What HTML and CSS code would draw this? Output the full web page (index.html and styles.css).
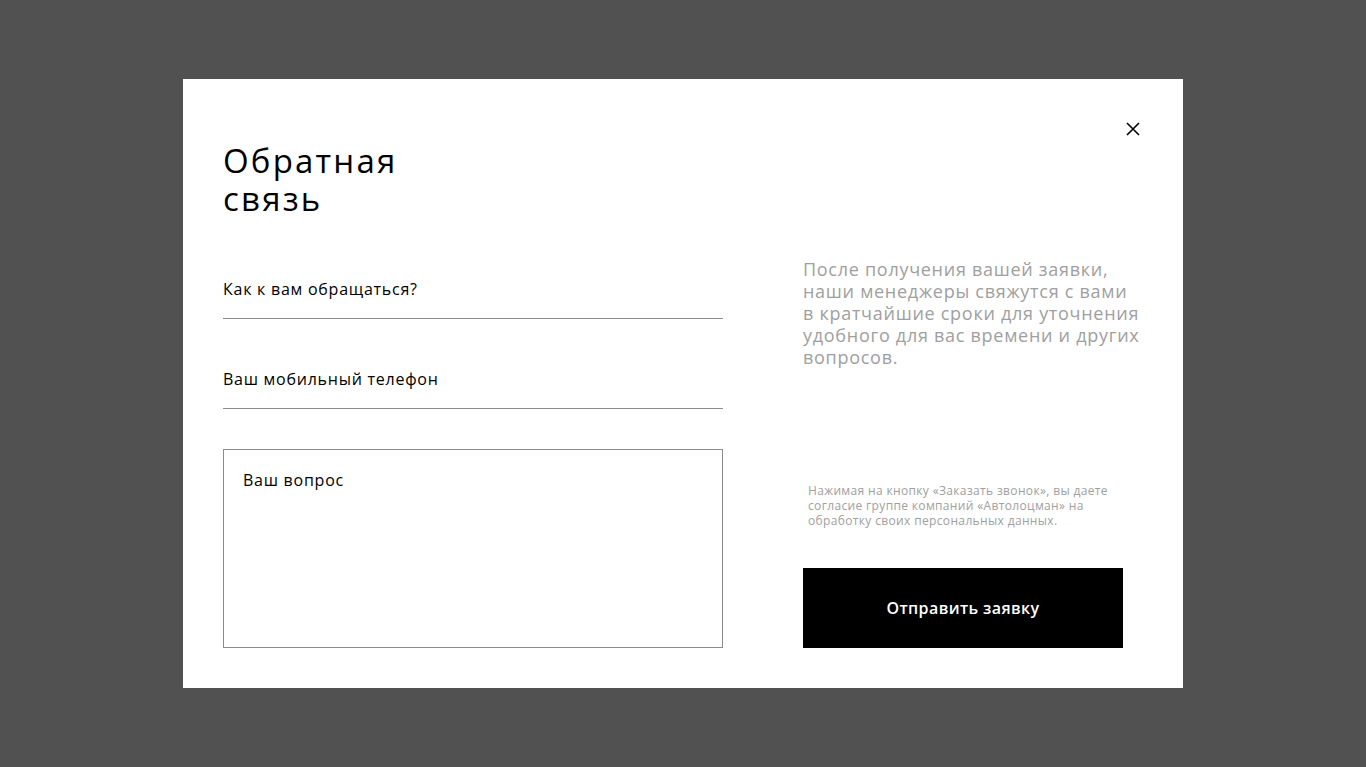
FILE: index.html
```html
<!DOCTYPE html>
<html lang="ru">
<head>
<meta charset="utf-8">
<title>Обратная связь</title>
<link rel="stylesheet" href="styles.css">
</head>
<body>
<div class="overlay">
  <div class="modal">
    <button class="close" aria-label="Закрыть">
      <svg width="14" height="14" viewBox="0 0 14 14"><path d="M1 1L13 13M13 1L1 13" stroke="#000" stroke-width="1.6" fill="none"/></svg>
    </button>
    <h1 class="title"><span class="title-line">Обратная</span><span class="title-line">связь</span></h1>
    <div class="body">
      <div class="form">
        <div class="field"><span class="label">Как к вам обращаться?</span></div>
        <div class="field"><span class="label">Ваш мобильный телефон</span></div>
        <div class="textarea"><span class="label">Ваш вопрос</span></div>
      </div>
      <div class="side">
        <p class="info">После получения вашей заявки,<br>наши менеджеры свяжутся с вами<br>в кратчайшие сроки для уточнения<br>удобного для вас времени и других<br>вопросов.</p>
        <p class="note">Нажимая на кнопку «Заказать звонок», вы даете<br>согласие группе компаний «Автолоцман» на<br>обработку своих персональных данных.</p>
        <button class="submit">Отправить заявку</button>
      </div>
    </div>
  </div>
</div>
</body>
</html>
```
FILE: styles.css
```css
* { box-sizing: border-box; }
html, body { margin: 0; height: 100%; }
body {
  background: #515151;
  font-family: "Open Sans", "Noto Sans", sans-serif;
  color: #000;
}
.overlay {
  height: 767px;
  padding-top: 79px;
  display: flex;
  justify-content: center;
  align-items: flex-start;
}
.modal {
  position: relative;
  width: 1000px;
  height: 609px;
  background: #fff;
  padding: 63px 40px 40px 40px;
}
.close {
  position: absolute;
  top: 43px;
  right: 43px;
  width: 14px;
  height: 14px;
  padding: 0;
  border: 0;
  background: none;
  display: block;
}
.close svg { display: block; }
.title {
  margin: 0;
  font-size: 33px;
  font-weight: 500;
  line-height: 38px;
  letter-spacing: 2.2px;
}
.title-line { display: block; height: 38px; }
.body {
  display: flex;
  gap: 80px;
  margin-top: 29px;
}
.form { width: 500px; display: flex; flex-direction: column; }
.field {
  height: 72px;
  border-bottom: 1px solid #8c8c8c;
  padding-top: 32px;
}
.field + .field { margin-top: 18px; }
.label {
  display: block;
  font-size: 16px;
  line-height: 20px;
  letter-spacing: 0.75px;
}
.textarea {
  margin-top: 40px;
  height: 199px;
  border: 1px solid #8c8c8c;
  padding: 20px 19px;
}
.side { width: 340px; display: flex; flex-direction: column; padding-top: 11px; }
.info {
  margin: 0;
  font-size: 18px;
  line-height: 22px;
  color: #a0a0a0;
  letter-spacing: 0.72px;
  white-space: nowrap;
}
.note {
  margin: 115px 0 0 5px;
  font-size: 12px;
  line-height: 15px;
  color: #a0a0a0;
  letter-spacing: 0.35px;
  white-space: nowrap;
}
.submit {
  margin-top: 40px;
  width: 320px;
  height: 80px;
  background: #000;
  color: #fff;
  border: 0;
  font-family: inherit;
  font-size: 16px;
  font-weight: 600;
  letter-spacing: 0.4px;
}
```
